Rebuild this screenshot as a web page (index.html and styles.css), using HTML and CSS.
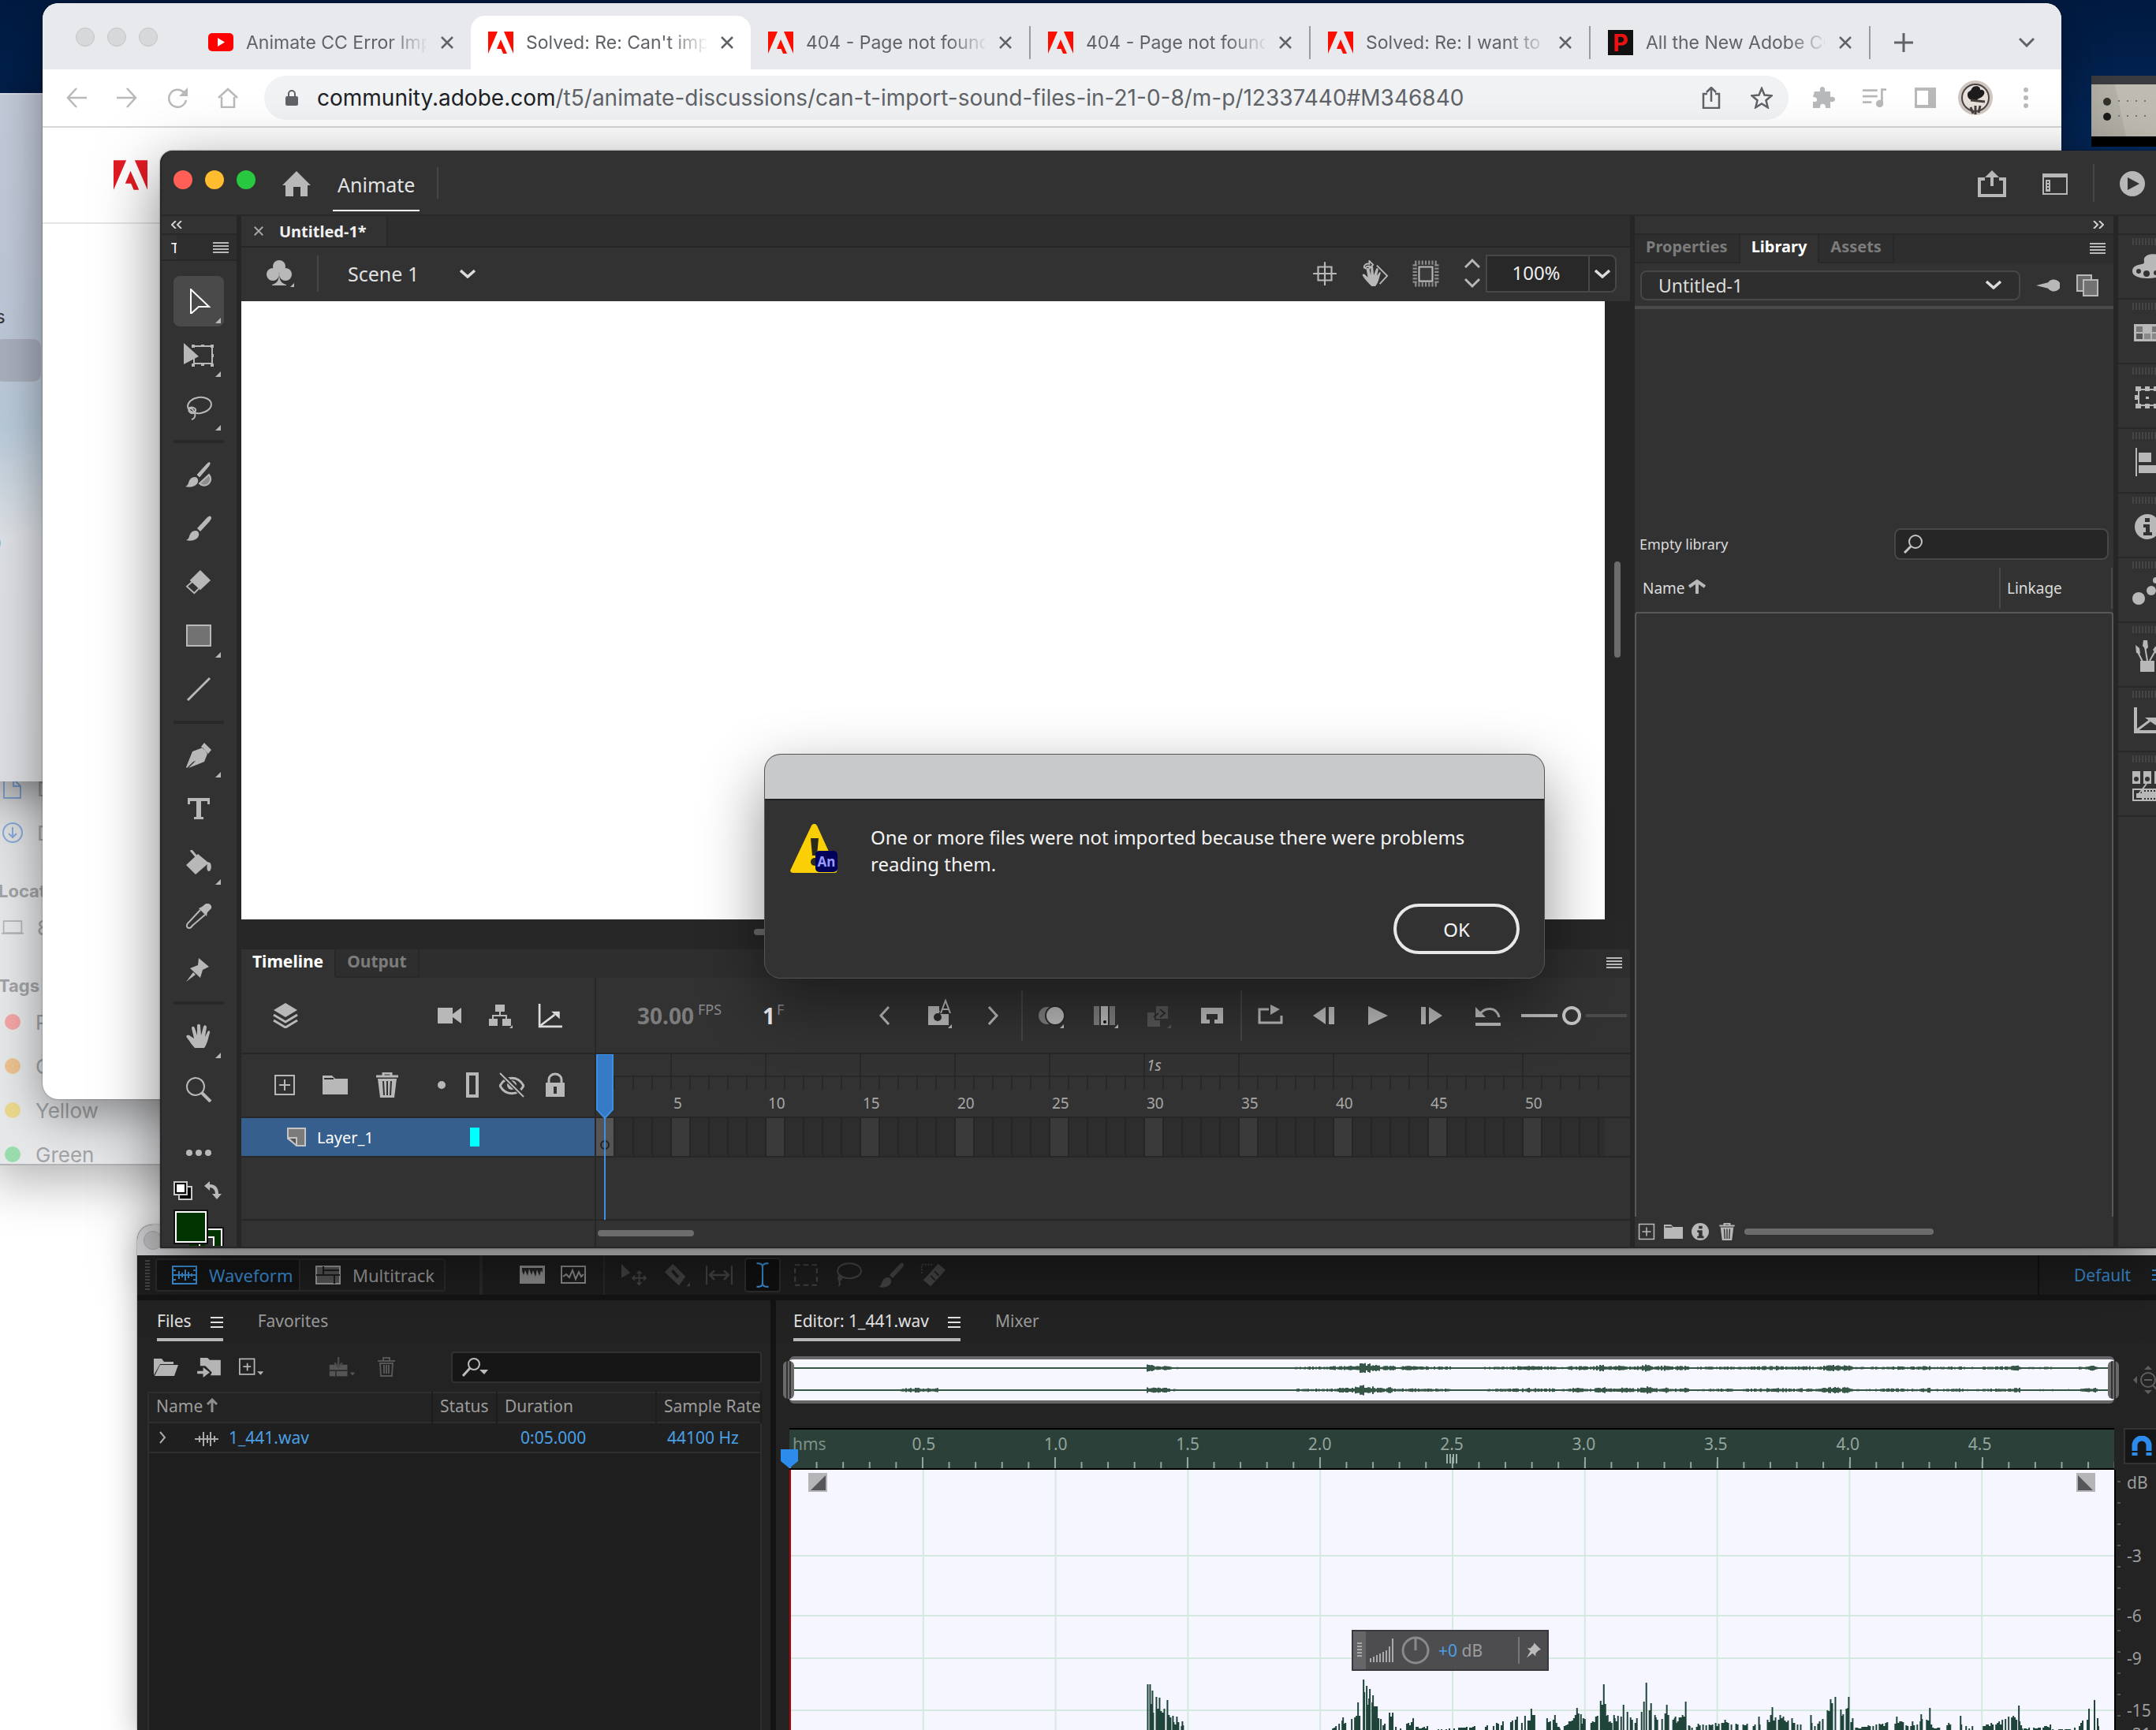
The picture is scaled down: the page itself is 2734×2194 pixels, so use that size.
FILE: index.html
```
<!DOCTYPE html>
<html lang="en">
<head>
    <meta charset="UTF-8">
    <title>Desktop</title>
    <link rel="stylesheet" href="styles.css">
</head>
<body>
<!-- shared icons -->
<svg class="sprite" aria-hidden="true">
    <symbol id="adobe" viewBox="0 0 32 28"><path d="M0 0h12L0 28zM20 0h12v28zM16 10l8 18h-5l-2.500-6H11z" fill="currentColor"/></symbol>
    <symbol id="close" viewBox="0 0 16 16"><path d="M1 1l14 14M15 1L1 15" stroke="currentColor" stroke-width="2.500" fill="none"/></symbol>
    <symbol id="menu" viewBox="0 0 20 14"><path d="M0 1h20M0 5h20M0 9h20M0 13h20" stroke="currentColor" stroke-width="2"/></symbol>
    <symbol id="menu3" viewBox="0 0 16 16"><path d="M0 2h16M0 8h16M0 14h16" stroke="currentColor" stroke-width="2"/></symbol>
    <symbol id="down" viewBox="0 0 20 12"><path d="M1 2l9 8 9-8" stroke="currentColor" stroke-width="3.500" fill="none"/></symbol>
    <symbol id="corner" viewBox="0 0 8 8"><path d="M8 0v8H0z" fill="currentColor"/></symbol>
    <symbol id="plusbox" viewBox="0 0 28 28"><path d="M2 2h24v24H2zM14 7v14M7 14h14" stroke="currentColor" stroke-width="2" fill="none"/></symbol>
    <symbol id="folder" viewBox="0 0 32 28"><path d="M0 2h12l4 4h16v20H0z" fill="currentColor"/><path d="M2 6h12" stroke="#323232" stroke-width="2"/></symbol>
    <symbol id="trash" viewBox="0 0 30 32"><path d="M10 4V1h10v3M1 5h28" stroke="currentColor" stroke-width="3" fill="none"/><path d="M3 8h24l-3 24H6z" fill="currentColor"/><path d="M10 11l1 18M15 11v18M20 11l-1 18" stroke="#323232" stroke-width="2"/></symbol>
    <symbol id="graph" viewBox="0 0 30 30"><path d="M2 1v27h27" stroke="currentColor" stroke-width="2.500" fill="none"/><path d="M3 27L20 14" stroke="currentColor" stroke-width="2.500"/><path d="M16 10h10v9z" fill="currentColor"/></symbol>
    <symbol id="brush" viewBox="0 0 32 32"><path d="M31 1c2 1 1 3-1 6L18 20l-4-4L26 3c2-2 4-3 5-2z" fill="currentColor"/><path d="M12 19c3 0 5 3 4 6-1 5-8 8-16 6 5-2 3-5 6-9 1-2 4-3 6-3z" fill="currentColor"/></symbol>
    <symbol id="palmhand" viewBox="0 0 32 32"><path d="M11 31c-4-4-6-8-10-13-2-3 1-4 3-3l6 4L7 6c0-3 3-3 4 0l3 9V3c0-3 4-3 4 0l1 12 3-11c1-3 4-2 4 1l-2 12 3-6c1-3 4-2 3 1-2 6-3 14-7 19z" fill="currentColor"/></symbol>
</svg>

<div class="desktop">

    <!-- picture-in-picture thumb -->
    <svg class="thumb" viewBox="0 0 82 90"><path d="M0 0h82v11H0z" fill="#3a3b3f"/><path d="M0 11h82v66H0z" fill="#b2afa6"/><path d="M30 11h52v66H44z" fill="#bebbb2"/><path d="M0 77h82v13H0z" fill="#000"/><circle cx="20" cy="33" r="5" fill="#33322f"/><circle cx="20" cy="52" r="5" fill="#1c1b1a"/><path d="M34 32h42M34 51h44" stroke="#77746d" stroke-width="2" stroke-dasharray="2 9"/></svg>

    <!-- finder windows, mostly covered -->
    <section class="window finder-back">
        <ul>
            <li><svg viewBox="0 0 26 28"><path d="M2 2h12l9 9v15H2zM14 2v9h9" fill="none" stroke="#86a9d8" stroke-width="2"/></svg>Documents</li>
            <li><svg viewBox="0 0 26 28"><circle cx="13" cy="14" r="12" fill="none" stroke="#86a9d8" stroke-width="2"/><path d="M13 7v13M8 15l5 5 5-5" fill="none" stroke="#86a9d8" stroke-width="2"/></svg>Downloads</li>
            <li class="finder-head">Locations</li>
            <li><svg viewBox="0 0 32 28"><path d="M3 5h26v17H3zM0 23h32" fill="none" stroke="#b2b3b6" stroke-width="2"/></svg>8GB</li>
            <li class="finder-head">Tags</li>
            <li><i class="tag red"></i>Red</li>
            <li><i class="tag orange"></i>Orange</li>
            <li><i class="tag yellow"></i>Yellow</li>
            <li><i class="tag green"></i>Green</li>
        </ul>
    </section>
    <section class="window finder-front">
        <div class="finder-item">s</div>
        <div class="finder-selected"></div>
        <div class="finder-item">)</div>
    </section>

    <!-- browser -->
    <section class="window chrome">
        <div class="tabstrip">
            <div class="lights inactive"><i></i><i></i><i></i></div>
            <div class="tab"><svg class="fav" viewBox="0 0 32 24"><rect width="32" height="23" rx="5" fill="#f00"/><path d="M12 6l9 5.500-9 5.500z" fill="#fff"/></svg><span>Animate CC Error Import</span><button aria-label="Close"><svg><use href="#close"/></svg></button></div>
            <div class="tab active"><svg class="fav"><use href="#adobe"/></svg><span>Solved: Re: Can't import</span><button aria-label="Close"><svg><use href="#close"/></svg></button></div>
            <div class="tab sep"><svg class="fav"><use href="#adobe"/></svg><span>404 - Page not found</span><button aria-label="Close"><svg><use href="#close"/></svg></button></div>
            <div class="tab sep"><svg class="fav"><use href="#adobe"/></svg><span>404 - Page not found</span><button aria-label="Close"><svg><use href="#close"/></svg></button></div>
            <div class="tab sep"><svg class="fav"><use href="#adobe"/></svg><span>Solved: Re: I want to</span><button aria-label="Close"><svg><use href="#close"/></svg></button></div>
            <div class="tab sep"><b class="fav favp">P</b><span>All the New Adobe CC</span><button aria-label="Close"><svg><use href="#close"/></svg></button></div>
            <button class="newtab" aria-label="New tab"><svg viewBox="0 0 24 24"><path d="M12 0v24M0 12h24" stroke="currentColor" stroke-width="3"/></svg></button>
            <button class="tabsearch" aria-label="Search tabs"><svg viewBox="0 0 20 12"><path d="M1 1l9 9 9-9" stroke="currentColor" stroke-width="3" fill="none"/></svg></button>
        </div>
        <div class="navbar">
            <div class="nav-buttons">
                <button aria-label="Back"><svg viewBox="0 0 26 26"><path d="M26 13H2M13 1L2 13l11 12" stroke="currentColor" stroke-width="2.500" fill="none"/></svg></button>
                <button aria-label="Forward"><svg viewBox="0 0 26 26"><path d="M0 13h24M13 1l11 12-11 12" stroke="currentColor" stroke-width="2.500" fill="none"/></svg></button>
                <button aria-label="Reload"><svg viewBox="0 0 26 26"><path d="M24 16a11 11 0 1 1-3-10" stroke="currentColor" stroke-width="2.500" fill="none"/><path d="M26 0v11H15z" fill="currentColor"/></svg></button>
                <button aria-label="Home"><svg viewBox="0 0 26 26"><path d="M5 12v13h16V12M1 13L13 2l12 11" stroke="currentColor" stroke-width="2.500" fill="none"/></svg></button>
            </div>
            <div class="omnibox">
                <svg class="lock" viewBox="0 0 16 20"><rect y="8" width="16" height="12" rx="2" fill="#5f6368"/><path d="M4 9V5a4 4 0 0 1 8 0v4" stroke="#5f6368" stroke-width="2" fill="none"/></svg>
                <a href="#"><b>community.adobe.com</b>/t5/animate-discussions/can-t-import-sound-files-in-21-0-8/m-p/12337440#M346840</a>
                <button aria-label="Share"><svg viewBox="0 0 28 28"><path d="M9 9H4v18h20V9h-5M14 19V2M8 7l6-6 6 6" stroke="currentColor" stroke-width="2.500" fill="none"/></svg></button>
                <button aria-label="Bookmark"><svg viewBox="0 0 28 28"><path d="M14 2l3.500 8.500 9 .8-7 6 2.200 9L14 21.500 6.300 26.300l2.200-9-7-6 9-.8z" stroke="currentColor" stroke-width="2.500" fill="none"/></svg></button>
            </div>
            <div class="extensions">
                <svg viewBox="0 0 28 28"><path d="M2 6h7c-2-8 8-8 6 0h7v7c8-2 8 8 0 6v8h-6c1-7-8-7-7 0H0v-8c7 1 7-6 0-6z" fill="#b7b9bb"/></svg>
                <svg viewBox="0 0 32 28"><path d="M0 4h20M0 12h20M0 20h12" stroke="#b7b9bb" stroke-width="3"/><path d="M32 3h-6v18" stroke="#b7b9bb" stroke-width="3" fill="none"/><circle cx="23" cy="22" r="5" fill="#b7b9bb"/></svg>
                <svg viewBox="0 0 28 28"><path d="M1 1h27v26H1z" fill="#b7b9bb"/><path d="M4 5h14v18H4z" fill="#fff"/></svg>
                <svg class="avatar" viewBox="0 0 44 44"><circle cx="22" cy="22" r="22" fill="#cfc6bf"/><circle cx="22" cy="22" r="17" fill="#e6dfda" stroke="#4a4443" stroke-width="2"/><path d="M12 17c1-4 4-3 5-6 3-6 12-4 11 1 5-1 7 4 4 7-3 4-6 3-8 6-5 2-13-1-12-8z" fill="#1d1b1c"/><path d="M16 25l18 2M16 34l3 8M22 32v11M28 32l-2 9" stroke="#443e3d" stroke-width="3"/></svg>
                <svg viewBox="0 0 28 28"><circle cx="14" cy="4" r="3" fill="#b7b9bb"/><circle cx="14" cy="14" r="3" fill="#b7b9bb"/><circle cx="14" cy="24" r="3" fill="#b7b9bb"/></svg>
            </div>
        </div>
        <div class="page-header"><svg class="page-logo"><use href="#adobe"/></svg></div>
    </section>

    <!-- audition -->
    <section class="window audition">
        <div class="au-title"><i></i></div>
        <div class="au-body">
            <div class="au-toolbar">
                <i class="grip"></i>
                <div class="au-modes">
                    <button class="on"><svg viewBox="0 0 32 24"><path d="M1 1h30v22H1zM1 12h30M1 6h4M1 18h4M27 6h4M27 18h4" stroke="currentColor" stroke-width="2" fill="none"/><path d="M9 7v10M13 9v6M17 5v14M21 8v8M25 10v4" stroke="currentColor" stroke-width="2"/></svg>Waveform</button>
                    <button><svg viewBox="0 0 32 24"><path d="M1 1h30v22H1z" stroke="currentColor" stroke-width="2" fill="#555"/><path d="M10 1v11M1 12h30M24 12v11M10 6h20" stroke="#1e1e1e" stroke-width="2"/></svg>Multitrack</button>
                </div>
                <i class="au-sep"></i>
                <div class="au-views">
                    <svg viewBox="0 0 32 24"><path d="M0 0h32v23H0z" fill="#8e8e8e"/><path d="M3 3h26v6l-2-3-2 7-3-8-2 9-3-8-2 6-3-8-2 9-3-7-2 6-2-5z" fill="#222"/></svg>
                    <svg viewBox="0 0 32 24"><path d="M1 1h30v21H1z" stroke="#8e8e8e" stroke-width="2" fill="none"/><path d="M3 14l4-3 4 4 4-9 4 11 4-9 3 6 3-3" stroke="#8e8e8e" stroke-width="2" fill="none"/></svg>
                </div>
                <i class="au-sep thin"></i>
                <div class="au-tools">
                    <svg viewBox="0 0 36 30"><path d="M1 0v19l12-7z" fill="currentColor"/><path d="M25 10v18M16 19h18M22 13l3-3 3 3M22 25l3 3 3-3M19 16l-3 3 3 3M31 16l3 3-3 3" stroke="currentColor" stroke-width="2" fill="none"/></svg>
                    <svg viewBox="0 0 36 30"><path d="M2 11L13 0l17 17-9 12z" fill="currentColor"/><path d="M12 9l8 9" stroke="#1e1e1e" stroke-width="4"/><path d="M36 25v5h-5z" fill="currentColor"/></svg>
                    <svg viewBox="0 0 40 30"><path d="M1 1v28M39 1v28M6 15h28M13 8l-7 7 7 7M27 8l7 7-7 7" stroke="currentColor" stroke-width="3" fill="none"/></svg>
                    <button aria-label="Time selection"><svg viewBox="0 0 16 30"><path d="M1 1c4 0 7 1 7 4v20c0 3-3 4-7 4M15 1c-4 0-7 1-7 4M15 29c-4 0-7-1-7-4" stroke="#3b8fd6" stroke-width="2" fill="none"/></svg></button>
                    <svg viewBox="0 0 30 30"><path d="M2 3h26v24H2z" stroke="currentColor" stroke-width="2" fill="none" stroke-dasharray="6 4"/></svg>
                    <svg viewBox="0 0 32 30"><ellipse cx="17" cy="10" rx="14" ry="9" stroke="currentColor" stroke-width="2" fill="none"/><path d="M7 15c-5 3-3 7 0 5s-2-6-2 0 2 6-1 8" stroke="currentColor" stroke-width="2" fill="none"/></svg>
                    <svg><use href="#brush"/></svg>
                    <svg viewBox="0 0 36 32"><path d="M24 1l10 8-20 22-10-8z" fill="currentColor"/><path d="M19 11l6 6M14 17l6 6" stroke="#1e1e1e" stroke-width="2"/><path d="M2 14V2h14" stroke="currentColor" stroke-width="2" fill="none" stroke-dasharray="2 2"/></svg>
                </div>
                <div class="au-workspace"><a href="#">Default</a><svg><use href="#menu3"/></svg></div>
            </div>
            <div class="au-panels">
                <div class="au-files">
                    <div class="au-tabs">
                        <a class="on" href="#">Files<svg><use href="#menu3"/></svg></a>
                        <a href="#">Favorites</a>
                    </div>
                    <div class="au-filebar">
                        <svg viewBox="0 0 32 24"><path d="M0 22V1h10l3 4h12v3H8z" fill="#b4b4b4"/><path d="M8 9h23l-5 14H1z" fill="#b4b4b4"/></svg>
                        <svg viewBox="0 0 32 28"><path d="M4 1h10l3 3h15v21H18l2-4-9-9H4z" fill="#b4b4b4"/><path d="M0 19h8v-5l9 7-9 7v-5H0z" fill="#b4b4b4"/></svg>
                        <svg viewBox="0 0 36 26"><path d="M1 1h21v22H1zM12 7v11M6 12h11" stroke="#b4b4b4" stroke-width="2" fill="none"/><path d="M26 19h9l-4 5z" fill="#b4b4b4"/></svg>
                        <i class="au-gap"></i>
                        <svg class="dim" viewBox="0 0 40 32"><path d="M0 12h28v18H0z" fill="#555"/><path d="M0 21h28M10 21v9" stroke="#2a2a2a" stroke-width="2"/><path d="M14 0v14M8 9l6 7 6-7" stroke="#4a4a4a" stroke-width="3" fill="none"/><path d="M32 24h8l-4 5z" fill="#555"/></svg>
                        <svg class="dim" viewBox="0 0 24 26"><path d="M8 4V1h8v3M1 5h22M4 8h16l-1 16H5zM9 10v11M12 10v11M15 10v11" stroke="#555" stroke-width="2" fill="none"/></svg>
                        <label class="au-search"><svg viewBox="0 0 34 24"><circle cx="15" cy="8" r="7" stroke="#bbb" stroke-width="2" fill="none"/><path d="M10 13L1 23" stroke="#bbb" stroke-width="3"/><path d="M22 15h11l-5 6z" fill="#bbb"/></svg><input type="text" aria-label="Search files"></label>
                    </div>
                    <table class="au-table">
                        <thead>
                            <tr><th>Name<svg viewBox="0 0 16 18"><path d="M8 18V3M2 8l6-6 6 6" stroke="#8e8e8e" stroke-width="3" fill="none"/></svg></th><th>Status</th><th>Duration</th><th>Sample Rate</th></tr>
                        </thead>
                        <tbody>
                            <tr>
                                <td><svg class="twist" viewBox="0 0 10 16"><path d="M1 1l6 7-6 7" stroke="#aaa" stroke-width="2" fill="none"/></svg><svg class="wavicon" viewBox="0 0 30 22"><path d="M0 11h30M6 7v8M11 2v18M16 6v10M20 2v18M25 7v8" stroke="#aaa" stroke-width="2"/></svg>1_441.wav</td>
                                <td></td><td>0:05.000</td><td>44100 Hz</td>
                            </tr>
                        </tbody>
                    </table>
                    <div class="au-list"></div>
                </div>
                <div class="au-editor">
                    <div class="au-tabs">
                        <a class="on" href="#">Editor: 1_441.wav<svg><use href="#menu3"/></svg></a>
                        <a href="#">Mixer</a>
                    </div>
                    <div class="au-overview-row">
                        <div class="au-overview"><svg id="overview" viewBox="0 0 1680 52" preserveAspectRatio="none"></svg></div>
                        <svg class="au-zoom" viewBox="0 0 40 36"><circle cx="19" cy="18" r="9" stroke="#5d5d5d" stroke-width="2" fill="none"/><path d="M14 18h10M25 25l9 9" stroke="#5d5d5d" stroke-width="2"/><path d="M19 0l5 5H14zM19 36l5-5H14zM0 18l5-5v10z" fill="#5d5d5d"/></svg>
                    </div>
                    <div class="au-ruler-row">
                        <div class="au-ruler">
                            <em>hms</em>
                            <span>0.5</span><span>1.0</span><span>1.5</span><span>2.0</span><span>2.5</span><span>3.0</span><span>3.5</span><span>4.0</span><span>4.5</span>
                            <svg class="au-mid" viewBox="0 0 14 12"><path d="M1 0v12M5 0v12M9 0v12M13 0v12" stroke="#9fb0a9" stroke-width="2"/></svg>
                            <svg class="au-head" viewBox="0 0 22 24"><path d="M0 0h22v15L11 24 0 15z" fill="#2d8ceb"/></svg>
                        </div>
                        <button class="au-snap" aria-label="Snap"><svg viewBox="0 0 26 26"><path d="M4 25V12a9 9 0 0 1 18 0v13" stroke="#2d8ceb" stroke-width="7" fill="none"/><path d="M0 20h8M18 20h8" stroke="#161616" stroke-width="2"/></svg></button>
                    </div>
                    <div class="au-wave-row">
                        <div class="au-wave">
                            <svg id="wave" viewBox="0 0 1680 330" preserveAspectRatio="none"></svg>
                            <svg class="fade in" viewBox="0 0 24 24"><path d="M0 0h24v24H0z" fill="#b5b5b8"/><path d="M22 3v19H3z" fill="#55555a"/></svg>
                            <svg class="fade out" viewBox="0 0 24 24"><path d="M0 0h24v24H0z" fill="#b5b5b8"/><path d="M2 3v19h19z" fill="#55555a"/></svg>
                            <div class="hud">
                                <i class="hud-grip"></i>
                                <svg viewBox="0 0 32 30"><path d="M2 30v-5M6 30v-7M10 30v-9M14 30V19M18 30V17M22 30V15M26 30V10M30 30V0" stroke="#aaa" stroke-width="2"/></svg>
                                <svg class="knob" viewBox="0 0 36 36"><circle cx="18" cy="18" r="16" stroke="#8a8a8c" stroke-width="3" fill="none"/><path d="M18 2v16" stroke="#8a8a8c" stroke-width="3"/></svg>
                                <span><b>+0</b> dB</span>
                                <svg class="hud-pin" viewBox="0 0 20 20"><path d="M11 0l9 9-3 1-4 4 0 4-4-4-8 6 5-9-4-4 4 0 4-4z" fill="#bbb"/></svg>
                            </div>
                        </div>
                        <div class="au-scale"><span>dB</span><span>-3</span><span>-6</span><span>-9</span><span>-15</span><span>-21</span></div>
                    </div>
                </div>
            </div>
        </div>
    </section>

    <!-- animate -->
    <section class="window animate">
        <header class="an-title">
            <div class="lights"><i class="red"></i><i class="amber"></i><i class="lime"></i></div>
            <svg class="an-home" viewBox="0 0 36 32"><path d="M18 0l18 18h-4v14h-9V20h-9v12H4V18H0z" fill="#b8b8b8"/></svg>
            <a class="an-name" href="#">Animate</a>
            <i class="an-vline"></i>
            <div class="an-right">
                <svg viewBox="0 0 36 34"><path d="M9 11H2v21h32V11h-7" stroke="#b8b8b8" stroke-width="4" fill="none"/><path d="M18 20V6" stroke="#b8b8b8" stroke-width="4"/><path d="M9 9l9-9 9 9z" fill="#b8b8b8"/></svg>
                <svg viewBox="0 0 36 34"><path d="M3 6h30v24H3z" stroke="#b8b8b8" stroke-width="2" fill="none"/><path d="M2 4h32v5H2zM6 12h6v15H6z" fill="#b8b8b8"/><path d="M8 14h2v2H8zM8 18h2v2H8zM8 22h2v2H8z" fill="#323232"/></svg>
                <i class="an-vline tall"></i>
                <svg viewBox="0 0 36 34"><circle cx="18" cy="17" r="16" fill="#b8b8b8"/><path d="M12 9l15 8-15 8z" fill="#323232"/></svg>
            </div>
        </header>
        <div class="an-main">

            <aside class="tools">
                <div class="tools-collapse"><svg viewBox="0 0 14 10"><path d="M6 0L1 5l5 5M13 0L8 5l5 5" stroke="#d0d0d0" stroke-width="2" fill="none"/></svg></div>
                <div class="tools-tab"><span>T</span><svg><use href="#menu"/></svg></div>
                <div class="toolset">
                    <button class="on" aria-label="Selection"><svg viewBox="0 0 32 32"><path d="M6 1v31l10-9h13z" stroke="#fff" stroke-width="2" fill="none"/></svg><svg class="more"><use href="#corner"/></svg></button>
                    <button aria-label="Free transform"><svg class="big" viewBox="0 0 38 32"><path d="M0 1v27l19-10z" fill="currentColor"/><path d="M14 5h22v22H13v-6" stroke="currentColor" stroke-width="2" fill="none"/><path d="M10 3h4v4h-4zM22 3h4v3h-4zM34 3h4v4h-4zM35 15h3v4h-3zM34 27h4v4h-4zM22 27h4v3h-4zM10 27h4v4h-4z" fill="currentColor"/></svg><svg class="more"><use href="#corner"/></svg></button>
                    <button aria-label="Lasso"><svg viewBox="0 0 32 32"><ellipse cx="17" cy="12" rx="15" ry="10" stroke="currentColor" stroke-width="2" fill="none" transform="rotate(-8 17 12)"/><path d="M3 16c3-3 10-1 9 3s-6 4-8 1 2-6 5-2 4 10-2 12" stroke="currentColor" stroke-width="2" fill="none"/></svg><svg class="more"><use href="#corner"/></svg></button>
                    <hr>
                    <button aria-label="Fluid brush"><svg viewBox="0 0 34 32"><path d="M30 16a8 8 0 1 1-12 11z" fill="#8c8c8c" stroke="currentColor" stroke-width="2"/><path d="M31 0c2 1 1 3-1 6L18 20l-4-4L26 3c2-2 4-4 5-3z" fill="currentColor" stroke="#323232" stroke-width="1"/><path d="M12 19c3 0 5 3 4 6-1 5-8 8-16 6 5-2 3-5 6-9 1-2 4-3 6-3z" fill="currentColor"/></svg></button>
                    <button aria-label="Brush"><svg><use href="#brush"/></svg></button>
                    <button aria-label="Eraser"><svg viewBox="0 0 34 34"><path d="M19 1l14 14-14 13L5 15z" fill="currentColor"/><path d="M8 17l-7 6 10 9 6-6" stroke="currentColor" stroke-width="2" fill="none"/></svg></button>
                    <button aria-label="Rectangle"><svg viewBox="0 0 32 32"><path d="M1 3h30v26H1z" stroke="currentColor" stroke-width="2" fill="#727272"/></svg><svg class="more"><use href="#corner"/></svg></button>
                    <button aria-label="Line"><svg viewBox="0 0 32 32"><path d="M2 30L30 2" stroke="currentColor" stroke-width="3"/></svg></button>
                    <hr>
                    <button aria-label="Pen"><svg viewBox="0 0 32 32"><path d="M21 6L8 11 0 31l1 1 8-8 3-1-9 9 20-8 4-10zM23 0l9 9-4 5-9-9z" fill="currentColor"/></svg><svg class="more"><use href="#corner"/></svg></button>
                    <button aria-label="Text"><svg viewBox="0 0 32 32"><path d="M2 2h28v8h-3V6h-8v20h3v3H10v-3h3V6H5v4H2z" fill="currentColor"/></svg></button>
                    <button aria-label="Paint bucket"><svg viewBox="0 0 32 32"><path d="M0 19L15 5l12 10 3 1c3 2 2 11-1 11s-3-6-2-9l-15 13z" fill="currentColor"/><path d="M6 0l10 12" stroke="currentColor" stroke-width="3"/></svg><svg class="more"><use href="#corner"/></svg></button>
                    <button aria-label="Eyedropper"><svg viewBox="0 0 32 32"><path d="M18 8L2 25c-2 3-1 6 2 6s3-3 5-4L24 14" stroke="currentColor" stroke-width="2" fill="none"/><path d="M16 6l4-2 5-4c5-1 8 2 7 6l-5 5-1 5z" fill="currentColor"/></svg></button>
                    <button aria-label="Asset warp"><svg viewBox="0 0 32 32"><path d="M16 1l13 11-8 4-3 10L5 14l10-4zM9 19l3 3L0 31z" fill="currentColor"/></svg></button>
                    <hr>
                    <button aria-label="Hand"><svg><use href="#palmhand"/></svg><svg class="more"><use href="#corner"/></svg></button>
                    <button aria-label="Zoom"><svg viewBox="0 0 32 32"><circle cx="12" cy="12" r="11" stroke="currentColor" stroke-width="2" fill="none"/><path d="M20 20l11 11" stroke="currentColor" stroke-width="4"/></svg></button>
                </div>
                <div class="swatches">
                    <svg class="dots" viewBox="0 0 32 8"><circle cx="4" cy="4" r="4" fill="#b8b8b8"/><circle cx="16" cy="4" r="4" fill="#b8b8b8"/><circle cx="28" cy="4" r="4" fill="#b8b8b8"/></svg>
                    <div class="swatch-tools">
                        <svg viewBox="0 0 24 24"><path d="M7 7h16v16H7z" fill="#000" stroke="#c8c8c8" stroke-width="2"/><path d="M1 1h16v16H1z" fill="#fff" stroke="#c8c8c8" stroke-width="2"/><path d="M3 3h12v12H3z" stroke="#000" stroke-width="2" fill="none"/></svg>
                        <svg viewBox="0 0 22 24"><path d="M0 6l7-6v4c7 0 11 4 11 12h4l-6 7-6-7h4c0-5-3-8-7-8v4z" fill="#b8b8b8"/></svg>
                    </div>
                    <svg class="swatch" viewBox="0 0 64 46"><path d="M20 36h20v10H20z" fill="#030"/><path d="M30 22h34v24H30z" fill="#111"/><path d="M32 24h30v22H32z" fill="#fff"/><path d="M34 26h26v20H34z" fill="#030"/><path d="M40 34h12v12H40z" fill="#fff"/><path d="M40 36h10v10H40z" fill="#323232"/><path d="M0 0h44v44H0z" fill="#111"/><path d="M2 2h40v40H2z" fill="#fff"/><path d="M4 4h36v36H4z" fill="#030"/></svg>
                </div>
            </aside>

            <main class="doc">
                <div class="doc-tabs"><div><svg><use href="#close"/></svg>Untitled-1*</div></div>
                <div class="editbar">
                    <svg class="club" viewBox="0 0 36 36"><circle cx="16" cy="9" r="8" fill="#b8b8b8"/><circle cx="8" cy="19" r="8" fill="#b8b8b8"/><circle cx="24" cy="19" r="8" fill="#b8b8b8"/><path d="M16 16c0 10-2 14-9 16v1h18v-1c-7-2-9-6-9-16z" fill="#b8b8b8"/><path d="M35 30v5h-5z" fill="#b8b8b8"/></svg>
                    <i class="bar-sep"></i>
                    <button class="scene">Scene 1<svg><use href="#down"/></svg></button>
                    <div class="editbar-right">
                        <svg viewBox="0 0 32 32"><path d="M16 2v28M2 16h28M8 8h16v16H8z" stroke="#b8b8b8" stroke-width="2" fill="none"/></svg>
                        <svg viewBox="0 0 36 36"><path d="M13 35C9 31 5 27 1 21c-1-3 2-3 4-1l3 3L6 12c0-2 3-2 4 0l2 8V10c0-3 3-3 3 0l1 10 3-8c1-2 3-2 3 1l-2 8 3-4c1-2 3-1 2 1-2 6-3 13-7 17z" fill="#b8b8b8"/><path d="M3 10c0-4 3-6 7-5V1l5 5-5 5V8c-3 0-4 0-5 3zM20 7l14 14-10 11" stroke="#b8b8b8" stroke-width="2" fill="none"/></svg>
                        <svg viewBox="0 0 32 32"><path d="M3 3h26v26H3z" stroke="#8c8c8c" stroke-width="5" fill="none" stroke-dasharray="2 2"/><path d="M8 8h16v17H8z" stroke="#b8b8b8" stroke-width="2" fill="#3a3a3a"/></svg>
                        <svg class="stepper" viewBox="0 0 20 40"><path d="M1 12l9-9 9 9M1 27l9 9 9-9" stroke="#b8b8b8" stroke-width="3" fill="none"/></svg>
                        <div class="zoombox"><input type="text" value="100%" aria-label="Zoom"><button aria-label="Zoom levels"><svg><use href="#down"/></svg></button></div>
                    </div>
                </div>
                <div class="stage"><div class="canvas"></div><div class="vscroll"><i></i></div></div>
                <div class="hscroll"><i></i></div>

                <div class="tl-tabs"><b class="on">Timeline</b><b>Output</b><svg><use href="#menu"/></svg></div>
                <div class="timeline">
                    <div class="tl-left-top">
                        <svg viewBox="0 0 32 32"><path d="M16 0l15 9-15 9L1 9z" fill="#b8b8b8"/><path d="M1 15l15 9 15-9M1 22l15 9 15-9" stroke="#b8b8b8" stroke-width="3" fill="none"/></svg>
                        <div>
                            <svg viewBox="0 0 32 32"><path d="M1 6h19v8l11-8v20l-11-8v8H1z" fill="#b8b8b8"/></svg>
                            <svg viewBox="0 0 32 32"><path d="M10 2h12v9H10zM2 20h11v9H2zM19 20h11v9H19z" fill="#b8b8b8"/><path d="M16 11v5M7 20v-4h17v4" stroke="#b8b8b8" stroke-width="2" fill="none"/><path d="M32 28v4h-4z" fill="#b8b8b8"/></svg>
                            <svg><use href="#graph"/></svg>
                        </div>
                    </div>
                    <div class="tl-controls">
                        <div class="fps">30.00<sup>FPS</sup></div>
                        <div class="frame">1<sup>F</sup></div>
                        <div class="tl-group">
                            <svg viewBox="0 0 32 32"><path d="M20 5L10 16l10 11" stroke="#b8b8b8" stroke-width="3" fill="none"/></svg>
                            <svg viewBox="0 0 32 32"><path d="M2 4h14v6h12v18H2z" fill="#b8b8b8"/><circle cx="14" cy="18" r="5" fill="#2b2b2b"/><path d="M15 14h16v-2L24-3z" fill="#2b2b2b"/><path d="M18 13l6-16 6 16M20 8h8" stroke="#b8b8b8" stroke-width="2" fill="none"/><path d="M32 27v5h-5z" fill="#b8b8b8"/></svg>
                            <svg viewBox="0 0 32 32"><path d="M11 5l10 11-10 11" stroke="#b8b8b8" stroke-width="3" fill="none"/></svg>
                        </div>
                        <i class="tl-sep"></i>
                        <div class="tl-group">
                            <svg viewBox="0 0 32 32"><circle cx="11" cy="16" r="11" fill="#7d7d7d"/><circle cx="21" cy="16" r="12" fill="#b8b8b8" stroke="#2b2b2b" stroke-width="2"/><path d="M32 27v5h-5z" fill="#b8b8b8"/></svg>
                            <svg viewBox="0 0 32 32"><path d="M2 4h7v24H2zM22 4h7v24h-7z" fill="#7d7d7d"/><path d="M11 4h9v24h-9z" fill="#b8b8b8"/><circle cx="16" cy="24" r="2" fill="#111"/><path d="M33 27v5h-5z" fill="#b8b8b8"/></svg>
                            <svg viewBox="0 0 32 32"><path d="M2 12h9v10h7v8H2zM13 4h15v16H13z" fill="#555"/><path d="M10 18l6-5M18 8l6 5-6 5" stroke="#2b2b2b" stroke-width="2" fill="none"/><path d="M32 27v5h-5z" fill="#555"/></svg>
                            <svg viewBox="0 0 32 32"><path d="M2 6h28v20H19v-5h4v-7H9v7h4v5H2z" fill="#b8b8b8"/></svg>
                        </div>
                        <i class="tl-sep"></i>
                        <div class="tl-group">
                            <svg viewBox="0 0 32 32"><path d="M14 8H2v17h28v-9" stroke="#b8b8b8" stroke-width="3" fill="none"/><path d="M16 2l12 6-12 7z" fill="#b8b8b8"/></svg>
                            <svg viewBox="0 0 32 32"><path d="M18 5v22L2 16zM22 5h7v22h-7z" fill="#b8b8b8"/></svg>
                            <svg viewBox="0 0 32 32"><path d="M4 4l25 12L4 28z" fill="#b8b8b8"/></svg>
                            <svg viewBox="0 0 32 32"><path d="M3 5h6v22H3zM13 5l17 11-17 11z" fill="#b8b8b8"/></svg>
                            <svg viewBox="0 0 32 32"><path d="M9 15C16 4 31 5 34 18" stroke="#b8b8b8" stroke-width="3" fill="none"/><path d="M4 5v13h13zM4 25h32v4H4z" fill="#b8b8b8"/></svg>
                            <input type="range" min="0" max="100" value="47" aria-label="Frame view size">
                        </div>
                    </div>
                    <div class="tl-layer-tools">
                        <svg><use href="#plusbox"/></svg>
                        <svg class="wide"><use href="#folder"/></svg>
                        <svg class="wide"><use href="#trash"/></svg>
                        <div>
                            <svg viewBox="0 0 10 32"><circle cx="5" cy="16" r="5" fill="#b8b8b8"/></svg>
                            <svg viewBox="0 0 16 32"><path d="M2 2h12v28H2z" stroke="#b8b8b8" stroke-width="4" fill="none"/></svg>
                            <svg viewBox="0 0 32 32"><path d="M1 17C8 4 24 4 31 17 24 30 8 30 1 17z" stroke="#b8b8b8" stroke-width="3" fill="none"/><circle cx="16" cy="16" r="6" fill="#b8b8b8"/><path d="M2 1l29 29" stroke="#323232" stroke-width="6"/><path d="M1 1l30 30" stroke="#b8b8b8" stroke-width="2"/></svg>
                            <svg viewBox="0 0 26 32"><path d="M1 13h24v18H1z" fill="#b8b8b8"/><path d="M5 14V9a8 7 0 0 1 16 0v5" stroke="#b8b8b8" stroke-width="3" fill="none"/><path d="M11 18h4v9h-4z" fill="#323232"/></svg>
                        </div>
                    </div>
                    <div class="tl-ruler">
                        <div class="tl-seconds"><i>1s</i></div>
                        <div class="tl-ticks"></div>
                        <div class="tl-numbers"><span>5</span><span>10</span><span>15</span><span>20</span><span>25</span><span>30</span><span>35</span><span>40</span><span>45</span><span>50</span></div>
                        <svg class="playhead" viewBox="0 0 22 210"><path d="M1 0h20v70L11 81 1 70z" fill="#3679c4" stroke="#3e8fe6" stroke-width="2"/><path d="M11 80v130" stroke="#3e8fe6" stroke-width="2"/></svg>
                    </div>
                    <div class="tl-layer">
                        <svg viewBox="0 0 24 24"><path d="M1 1h22v22H13L1 14z" stroke="#c4c4c4" stroke-width="2" fill="#7b7b7b"/><path d="M1 13h11v10z" fill="#555" stroke="#c4c4c4" stroke-width="2"/></svg>
                        <span>Layer_1</span><i></i>
                    </div>
                    <div class="tl-frames"><svg viewBox="0 0 22 48"><path d="M0 0h22v48H0z" fill="#555"/><ellipse cx="11" cy="34" rx="5" ry="5" stroke="#222" stroke-width="2" fill="none"/></svg></div>
                    <div class="tl-empty"></div><div class="tl-empty"></div>
                    <div class="tl-foot"></div><div class="tl-foot"><i></i></div>
                </div>
            </main>

            <aside class="library">
                <div class="lib-collapse"><svg viewBox="0 0 14 10"><path d="M1 0l5 5-5 5M8 0l5 5-5 5" stroke="#d0d0d0" stroke-width="2" fill="none"/></svg></div>
                <div class="lib-tabs"><b>Properties</b><b class="on">Library</b><b>Assets</b><svg><use href="#menu"/></svg></div>
                <div class="lib-pick">
                    <div class="lib-select"><select aria-label="Document"><option>Untitled-1</option></select><svg><use href="#down"/></svg></div>
                    <svg viewBox="0 0 32 20"><path d="M0 10l16-4a9 8 0 1 1 0 8z" fill="#b8b8b8"/></svg>
                    <svg viewBox="0 0 28 28"><path d="M1 1h18v20H1z" stroke="#b8b8b8" stroke-width="2" fill="#6a6a6a"/><path d="M9 7h18v20H9z" stroke="#b8b8b8" stroke-width="2" fill="#727272"/></svg>
                </div>
                <div class="lib-preview"></div>
                <div class="lib-find"><span>Empty library</span><label><svg viewBox="0 0 24 24"><circle cx="15" cy="9" r="8" stroke="#c4c4c4" stroke-width="2" fill="none"/><path d="M9 15l-8 8" stroke="#c4c4c4" stroke-width="3"/></svg><input type="text" aria-label="Search library"></label></div>
                <table class="lib-table"><tr><th>Name<svg viewBox="0 0 22 18"><path d="M11 18V3M1 9l10-7 10 7" stroke="#b8b8b8" stroke-width="4" fill="none"/></svg></th><th>Linkage</th></tr></table>
                <div class="lib-list"></div>
                <div class="lib-foot">
                    <svg><use href="#plusbox"/></svg><svg><use href="#folder"/></svg>
                    <svg viewBox="0 0 24 24"><circle cx="12" cy="12" r="12" fill="#b8b8b8"/><path d="M10 4h5v4h-5zM8 10h7v8h2v3H8v-3h2v-5H8z" fill="#323232"/></svg>
                    <svg><use href="#trash"/></svg><i></i>
                </div>
            </aside>

            <nav class="dock">
                <button aria-label="Color"><svg viewBox="0 0 40 36"><path d="M1 22c0-6 5-8 12-9 5-1 2-4 3-7 2-7 16-7 24-3v25c-16 5-39 4-39-6z" fill="currentColor"/><circle cx="9" cy="22" r="3" fill="#323232"/><circle cx="19" cy="25" r="4" fill="#323232"/><circle cx="31" cy="24" r="3" fill="#323232"/></svg></button>
                <button aria-label="Swatches"><svg viewBox="0 0 40 36"><path d="M3 7h37v22H3z" fill="currentColor"/><path d="M6 10h8v7H6zM26 10h14v7H26z" fill="#777"/><path d="M6 19h8v7H6z" fill="#555"/><path d="M16 19h8v7h-8zM26 19h14v7H26z" fill="#888"/></svg></button>
                <button aria-label="Transform"><svg viewBox="0 0 40 36"><path d="M9 8h31M9 28h31M9 8v20" stroke="currentColor" stroke-width="2"/><path d="M5 4h7v6H5zM5 26h7v6H5zM4 15h5v6H4zM17 4h6v6h-6zM17 26h6v6h-6zM28 4h7v6h-7zM28 26h7v6h-7zM18 17h4v3h-4z" fill="currentColor"/></svg></button>
                <button aria-label="Align"><svg viewBox="0 0 40 36"><path d="M5 0h2v36H5zM9 6h16v12H9zM9 22h31v10H9z" fill="currentColor"/></svg></button>
                <button aria-label="Info"><svg viewBox="0 0 40 36"><circle cx="20" cy="18" r="16" fill="currentColor"/><path d="M17 7h6v5h-6zM15 15h8v10h3v4H15v-4h3v-6h-3z" fill="#323232"/></svg></button>
                <button aria-label="Motion"><svg viewBox="0 0 40 36"><circle cx="9" cy="27" r="8" fill="currentColor"/><circle cx="25" cy="17" r="6" fill="currentColor"/><circle cx="31" cy="4" r="4" fill="currentColor"/></svg></button>
                <button aria-label="Brushes"><svg viewBox="0 0 40 40"><path d="M11 26h18v14H11z" fill="currentColor"/><path d="M14 27L8 15M20 26L17 8M23 26l8-14" stroke="currentColor" stroke-width="2"/><path d="M5 6l5 4 1 7-5-1zM15 0h5l1 9-3 3-4-5zM27 12l3-4h6l-5 9z" fill="currentColor"/></svg></button>
                <button aria-label="Motion editor"><svg viewBox="0 0 40 36"><path d="M5 1v31h35" stroke="currentColor" stroke-width="4" fill="none"/><path d="M7 30l16-12" stroke="currentColor" stroke-width="3"/><path d="M17 14h18v12l-7-4z" fill="currentColor"/></svg></button>
                <button aria-label="Frame picker"><svg viewBox="0 0 40 40"><path d="M1 2h10v16H1zM15 2h10v16H15zM29 2h11v16H29zM1 24h39v16H1z" fill="currentColor"/><circle cx="6" cy="12" r="3" fill="#323232"/><circle cx="20" cy="12" r="3" fill="#323232"/><path d="M3 26h10v12H3z" fill="#323232"/><path d="M6 30h7v6H6z" fill="currentColor"/><path d="M16 27h24M16 37h24" stroke="#323232" stroke-width="2" stroke-dasharray="2 2"/><path d="M9 31l10-13" stroke="currentColor" stroke-width="2"/></svg></button>
            </nav>
        </div>
    </section>

    <!-- import error -->
    <section class="window dialog" role="alertdialog" aria-labelledby="message">
        <div class="dialog-title"></div>
        <div class="dialog-body">
            <svg viewBox="0 0 60 62"><path d="M27 2c2-3 5-3 7 0l25 55c1 3 0 5-3 5H4c-3 0-5-2-3-5z" fill="#fbcf06"/><path d="M26 18h10l-2 22h-6z" fill="#2b2a1c"/><circle cx="31" cy="48" r="5" fill="#2b2a1c"/><rect x="32" y="34" width="28" height="27" rx="5" fill="#00005b"/><text x="46" y="54" text-anchor="middle" font-family="Noto Sans, sans-serif" font-weight="bold" font-size="17" fill="#9999ff">An</text></svg>
            <p id="message">One or more files were not imported because there were problems reading them.</p>
            <button>OK</button>
        </div>
    </section>
</div>
<script src="wave.js"></script>
</body>
</html>
```

FILE: styles.css
```
* {
    box-sizing: border-box;
}
body {
    margin: 0;
    font-family: "Noto Sans", "Open Sans", sans-serif;
    color: #dcdcdc;
}
button, input, select {
    font: inherit;
    color: inherit;
    background: none;
    border: 0;
    padding: 0;
    margin: 0;
}
a {
    color: inherit;
    text-decoration: none;
}
svg, i {
    display: block;
    flex: none;
}
.sprite {
    position: absolute;
    width: 0;
    height: 0;
}
.desktop {
    position: relative;
    height: 100vh;
    overflow: hidden;
    background: linear-gradient(#001a40, #04285c 190px, #fff 1400px);
}
.desktop::before {
    content: "";
    position: absolute;
    left: 0;
    right: 0;
    top: 1000px;
    bottom: 0;
    background: #fff;
}
.window {
    position: absolute;
}
.thumb {
    position: absolute;
    right: 0;
    top: 96px;
    width: 82px;
}

/* finder */
.finder-back {
    left: -10px;
    top: 960px;
    width: 400px;
    bottom: 716px;
    background: linear-gradient(#d6d7d9, #e6e7e9 200px);
    border-bottom: 2px solid #b4b4b6;
    box-shadow: 0 20px 60px rgba(0, 0, 0, .3);
    font-family: Inter, sans-serif;
    font-size: 26px;
    color: #a2a3a6;
}
.finder-back ul {
    list-style: none;
    margin: 0;
    padding: 12px 0 0 12px;
}
.finder-back li {
    display: flex;
    align-items: center;
    gap: 17px;
    height: 56px;
}
.finder-back li svg {
    width: 28px;
    height: 28px;
}
.finder-back .finder-head {
    font-size: 22px;
    font-weight: bold;
    height: 64px;
    padding-top: 28px;
    margin-left: -4px;
}
.tag {
    width: 20px;
    height: 20px;
    border-radius: 50%;
    margin: 0 2px 0 4px;
}
.tag.red { background: #f3a5a6; }
.tag.orange { background: #eec290; }
.tag.yellow { background: #ead98c; }
.tag.green { background: #97dcaa; }
.finder-front {
    left: -10px;
    top: 118px;
    width: 100px;
    bottom: 1203px;
    background: linear-gradient(#c3cad8, #bcc6d6 300px, #b8c9d8 420px, #dcdfe3 560px, #dcdde0);
    border-top: 2px solid #d5dae3;
    box-shadow: 0 10px 60px rgba(0, 0, 0, .5);
    font-family: Inter, sans-serif;
    font-size: 24px;
    line-height: 32px;
    color: #333;
    padding: 266px 0 0 4px;
}
.finder-selected {
    height: 54px;
    width: 58px;
    margin: 12px 0 188px;
    border-radius: 10px;
    background: #a9aebc;
}

/* browser */
.chrome {
    left: 54px;
    right: 120px;
    top: 4px;
    bottom: 800px;
    background: #fff;
    border-radius: 20px;
    box-shadow: 0 0 2px rgba(0, 0, 0, .5), 0 20px 60px rgba(0, 0, 0, .4);
    font-family: Inter, Roboto, sans-serif;
    color: #5f6368;
}
.tabstrip {
    display: flex;
    align-items: center;
    height: 84px;
    padding: 16px 34px 0 42px;
    background: #e8e9ec;
    border-radius: 20px 20px 0 0;
}
.lights {
    display: flex;
    gap: 16px;
}
.lights i {
    width: 24px;
    height: 24px;
    border-radius: 50%;
}
.lights .red { background: #ff5f57; }
.lights .amber { background: #febc2e; }
.lights .lime { background: #28c840; }
.lights.inactive {
    width: 146px;
    padding-bottom: 14px;
}
.lights.inactive i {
    background: #d7d8da;
    border: 1px solid #c2c3c5;
}
.tab {
    display: flex;
    align-items: center;
    flex: 0 1 355px;
    min-width: 0;
    height: 68px;
    padding-left: 22px;
    font-size: 23px;
}
.tab .fav {
    width: 32px;
    height: 28px;
    margin-right: 16px;
    color: #fa0f00;
}
.tab span {
    flex: 1;
    overflow: hidden;
    white-space: nowrap;
    -webkit-mask-image: linear-gradient(90deg, #000 180px, transparent 232px);
    mask-image: linear-gradient(90deg, #000 180px, transparent 232px);
}
.tab button {
    width: 52px;
    margin-right: 4px;
}
.tab button svg {
    width: 16px;
    height: 16px;
    margin: 0 auto;
}
.tab.active {
    background: #fff;
    border-radius: 18px 18px 0 0;
}
.tab.sep {
    border: 0 solid transparent;
    border-image: linear-gradient(transparent 14px, #9a9b9e 14px, #9a9b9e 54px, transparent 54px) 1;
    border-width: 0 2px 0 0;
}
.tab .favp {
    height: 32px;
    background: #111;
    color: #e11;
    font-size: 30px;
    line-height: 32px;
    text-align: center;
}
.newtab svg {
    width: 24px;
    height: 24px;
    margin-left: 30px;
}
.tabsearch {
    margin-left: auto;
}
.tabsearch svg {
    width: 20px;
    height: 12px;
}
.navbar {
    display: flex;
    align-items: center;
    height: 74px;
    padding: 0 30px;
    border-bottom: 2px solid #d6d7d9;
}
.nav-buttons {
    display: flex;
    gap: 38px;
    width: 251px;
    color: #b7b9bb;
}
.nav-buttons svg {
    width: 26px;
    height: 26px;
}
.omnibox {
    display: flex;
    align-items: center;
    flex: 1;
    height: 56px;
    padding: 0 20px 0 27px;
    border-radius: 28px;
    background: #f1f2f4;
    font-size: 28px;
}
.omnibox .lock {
    width: 16px;
    height: 20px;
    margin-right: 24px;
}
.omnibox a {
    flex: 1;
    white-space: nowrap;
}
.omnibox b {
    font-weight: normal;
    color: #202124;
}
.omnibox button {
    margin-left: 36px;
}
.omnibox button svg {
    width: 28px;
    height: 28px;
}
.extensions {
    display: flex;
    align-items: center;
    gap: 34px;
    padding-left: 30px;
}
.extensions svg {
    width: 30px;
    height: 28px;
}
.extensions .avatar {
    width: 44px;
    height: 44px;
    margin: 0 -7px;
}
.page-header {
    height: 122px;
    padding: 41px 0 0 90px;
    border-bottom: 2px solid #e6e6e6;
}
.page-logo {
    width: 43px;
    height: 38px;
    color: #e31b23;
}

/* animate window */
.animate {
    left: 203px;
    right: 0;
    top: 191px;
    bottom: 611px;
    display: flex;
    flex-direction: column;
    background: #323232;
    border: 2px solid #262626;
    border-width: 0 0 2px 2px;
    border-radius: 16px 0 0 0;
    box-shadow: 0 0 2px rgba(0, 0, 0, .6), 0 24px 80px rgba(0, 0, 0, .5);
}
.an-title {
    display: flex;
    align-items: flex-start;
    height: 81px;
    padding: 25px 12px 0 15px;
}
.an-home {
    width: 36px;
    height: 32px;
    margin: 1px 28px 0 34px;
}
.an-name {
    height: 52px;
    padding: 0 6px;
    font-size: 25px;
    line-height: 36px;
    color: #e4e4e4;
    border-bottom: 2px solid #fff;
}
.an-vline {
    width: 2px;
    height: 40px;
    margin: -4px 0 0 22px;
    background: #464646;
}
.an-vline.tall {
    height: 48px;
    margin: -8px -14px 0;
}
.an-right {
    display: flex;
    gap: 44px;
    margin-left: auto;
}
.an-right svg {
    width: 36px;
    height: 34px;
}
.an-main {
    flex: 1;
    display: grid;
    grid-template-columns: 95px minmax(0, 1fr) 607px 48px;
    gap: 6px;
    background: #262626;
    border-top: 2px solid #282828;
    min-height: 0;
}
.an-main > * {
    background: #323232;
    min-width: 0;
}

/* tools */
.tools {
    display: flex;
    flex-direction: column;
    overflow: hidden;
}
.tools-collapse, .lib-collapse {
    height: 24px;
    padding: 6px 12px;
    border-bottom: 2px solid #282828;
}
.tools-collapse svg, .lib-collapse svg {
    width: 14px;
    height: 10px;
}
.tools-tab {
    display: flex;
    align-items: center;
    height: 33px;
    padding-left: 12px;
    font-size: 18px;
    color: #fff;
    background: linear-gradient(90deg, #323232 19px, #2d2d2d 19px);
    border-bottom: 2px solid #282828;
}
.tools-tab span {
    width: 7px;
    overflow: hidden;
}
.tools-tab svg {
    width: 20px;
    height: 14px;
    margin-left: 46px;
    color: #b8b8b8;
}
.toolset {
    padding: 19px 16px 0 15px;
    color: #b8b8b8;
}
.toolset button {
    display: flex;
    align-items: center;
    justify-content: center;
    width: 64px;
    height: 64px;
    margin-bottom: 4px;
    border-radius: 8px;
    position: relative;
}
.toolset button svg {
    width: 34px;
    height: 32px;
}
.toolset button .big {
    width: 38px;
}
.toolset button .more {
    position: absolute;
    right: 4px;
    bottom: 4px;
    width: 7px;
    height: 7px;
}
.toolset .on {
    background: #4a4a4a;
}
.toolset hr {
    height: 4px;
    margin: 8px 0;
    border: 0;
    border-radius: 2px;
    background: #282828;
}
.swatches {
    padding: 40px 0 0 15px;
}
.dots {
    width: 32px;
    height: 8px;
    margin-left: 16px;
}
.swatch-tools {
    display: flex;
    justify-content: space-between;
    width: 62px;
    margin: 32px 0 12px;
}
.swatch-tools svg {
    width: 24px;
    height: 24px;
}
.swatch {
    width: 64px;
    height: 46px;
}

/* document */
.doc {
    display: flex;
    flex-direction: column;
}
.doc-tabs {
    height: 40px;
    background: #2e2e2e;
    border-bottom: 2px solid #262626;
}
.doc-tabs div {
    display: flex;
    align-items: center;
    gap: 19px;
    width: 186px;
    height: 38px;
    padding-left: 15px;
    font-size: 20px;
    font-weight: bold;
    color: #f0f0f0;
    background: #323232;
    border-right: 2px solid #282828;
}
.doc-tabs svg {
    width: 14px;
    height: 12px;
    color: #a8a8a8;
}
.editbar {
    display: flex;
    align-items: center;
    height: 68px;
    padding: 0 17px 2px 32px;
}
.club {
    width: 36px;
    height: 36px;
}
.bar-sep {
    width: 2px;
    height: 46px;
    margin: 0 37px 0 28px;
    background: #464646;
}
.scene {
    display: flex;
    align-items: center;
    gap: 52px;
    font-size: 25px;
    color: #e0e0e0;
}
.scene svg, .zoombox svg, .lib-select svg {
    width: 20px;
    height: 12px;
    color: #dcdcdc;
}
.editbar-right {
    display: flex;
    align-items: center;
    gap: 30px;
    margin-left: auto;
}
.editbar-right > svg {
    width: 34px;
    height: 34px;
}
.editbar-right .stepper {
    width: 20px;
    height: 40px;
    margin: 0 -23px 0 2px;
}
.zoombox {
    display: flex;
    width: 166px;
    height: 48px;
    border: 2px solid #474747;
    border-radius: 0 8px 8px 0;
    background: #282828;
}
.zoombox input {
    width: 130px;
    padding: 0 4px 4px 0;
    font-size: 24px;
    text-align: center;
    color: #f0f0f0;
    border-right: 2px solid #474747;
}
.zoombox button {
    padding-left: 6px;
}
.stage {
    flex: 1;
    display: flex;
    background: #262626;
    min-height: 0;
}
.canvas {
    flex: 1;
    background: #fff;
}
.vscroll {
    width: 32px;
    padding: 330px 12px 0;
}
.vscroll i {
    height: 122px;
    border-radius: 4px;
    background: #6c6c6c;
}
.hscroll {
    height: 38px;
    padding: 12px 650px;
    background: #272727;
}
.hscroll i {
    width: 160px;
    height: 8px;
    border-radius: 4px;
    background: #6c6c6c;
}

/* timeline */
.tl-tabs, .lib-tabs {
    display: flex;
    align-items: center;
    height: 36px;
    font-size: 20px;
    background: #2e2e2e;
    padding-right: 10px;
}
.tl-tabs b, .lib-tabs b {
    height: 100%;
    line-height: 30px;
    padding: 0 14px;
    color: #7c7c7c;
    border-right: 2px solid #282828;
    border-bottom: 2px solid #282828;
}
.tl-tabs {
    font-size: 21px;
}
.tl-tabs .on, .lib-tabs .on {
    color: #fff;
    background: #323232;
    border-bottom-color: #323232;
}
.tl-tabs svg, .lib-tabs svg {
    width: 20px;
    height: 14px;
    margin: 0 0 2px auto;
    color: #b8b8b8;
}
.timeline {
    display: grid;
    grid-template-columns: 448px minmax(0, 1fr);
    grid-template-rows: 95px 79px 48px 78px 33px;
    gap: 2px;
    background: #272727;
}
.timeline > div {
    background: #323232;
}
.tl-left-top, .tl-left-top div {
    display: flex;
    align-items: center;
    justify-content: space-between;
}
.tl-left-top {
    padding: 0 40px;
}
.tl-left-top div {
    gap: 32px;
}
.tl-left-top svg {
    width: 32px;
    height: 32px;
}
.tl-controls {
    display: flex;
    align-items: center;
    padding-left: 52px;
    font-size: 28px;
    font-weight: bold;
    overflow: hidden;
    white-space: nowrap;
}
.tl-controls sup {
    font-size: 18px;
    font-weight: normal;
    margin-left: 5px;
    vertical-align: 12px;
    line-height: 0;
    color: #8a8a8a;
}
.fps {
    width: 159px;
    color: #7c7c7c;
}
.frame {
    width: 140px;
    color: #f0f0f0;
}
.tl-controls .frame sup {
    margin-left: 2px;
}
.tl-group {
    display: flex;
    align-items: center;
    gap: 36px;
}
.tl-group svg {
    width: 32px;
    height: 32px;
    overflow: visible;
}
.tl-sep {
    width: 2px;
    height: 64px;
    margin: 0 20px;
    background: #454545;
}
.tl-group input {
    -webkit-appearance: none;
    appearance: none;
    width: 134px;
    height: 24px;
    margin-left: -6px;
    background: linear-gradient(90deg, #b8b8b8 60px, #4a4a4a 60px) center / 100% 4px no-repeat;
}
.tl-group input::-webkit-slider-thumb {
    -webkit-appearance: none;
    width: 24px;
    height: 24px;
    border: 4px solid #c4c4c4;
    border-radius: 50%;
    background: #323232;
    box-shadow: 0 0 0 6px #323232;
}
.tl-layer-tools, .tl-layer-tools div {
    display: flex;
    align-items: center;
}
.tl-layer-tools {
    gap: 34px;
    padding: 0 37px 2px 41px;
    color: #b8b8b8;
}
.tl-layer-tools svg {
    width: 28px;
    height: 32px;
}
.tl-layer-tools .wide {
    width: 32px;
}
.tl-layer-tools div {
    flex: 1;
    justify-content: flex-end;
    gap: 26px;
}
.tl-layer-tools div svg {
    width: auto;
}
.tl-ruler {
    position: relative;
    font-size: 19px;
    color: #a8a8a8;
}
.tl-seconds {
    height: 28px;
    background: repeating-linear-gradient(90deg, #282828 0 2px, transparent 2px 120px) 94px 0 / calc(100% - 132px) 100% no-repeat;
    padding-left: 698px;
    line-height: 28px;
    border-bottom: 1px solid #282828;
}
.tl-ticks {
    height: 17px;
    background: repeating-linear-gradient(90deg, transparent 0 22px, #282828 22px 24px) 0 0 / calc(100% - 38px) 100% no-repeat;
    border-top: 1px solid #282828;
}
.tl-numbers {
    display: flex;
    padding-left: 98px;
    line-height: 34px;
}
.tl-numbers span {
    flex: none;
    width: 120px;
}
.playhead {
    position: absolute;
    left: 0;
    top: 0;
    width: 22px;
    height: 210px;
    z-index: 1;
}
.tl-layer {
    display: flex;
    align-items: center;
    padding-left: 58px;
    font-size: 20px;
    color: #fff;
}
.timeline .tl-layer {
    background: #365f8e;
}
.tl-layer svg {
    width: 24px;
    height: 24px;
}
.tl-layer span {
    width: 194px;
    margin-left: 14px;
}
.tl-layer i {
    width: 12px;
    height: 24px;
    background: #0ff;
}
.timeline .tl-frames {
    margin-right: 32px;
    background:
        repeating-linear-gradient(90deg, transparent 0 22px, #262626 22px 24px),
        repeating-linear-gradient(90deg, #2d2d2d 0 96px, #3a3a3a 96px 118px, #2d2d2d 118px 120px);
    box-shadow: 32px 0 #323232;
}
.tl-frames svg {
    width: 22px;
    height: 48px;
}
.tl-foot i {
    width: 122px;
    height: 8px;
    margin: 12px 0 0 2px;
    border-radius: 4px;
    background: #6c6c6c;
}

/* library */
.library {
    display: flex;
    flex-direction: column;
    font-size: 19px;
}
.lib-collapse svg {
    margin-left: auto;
}
.lib-pick {
    display: flex;
    align-items: center;
    gap: 20px;
    height: 54px;
    padding: 2px 18px 0 7px;
}
.lib-pick > svg {
    width: 30px;
    height: 28px;
}
.lib-select {
    flex: 1;
    position: relative;
}
.lib-select select {
    -webkit-appearance: none;
    appearance: none;
    width: 100%;
    height: 38px;
    padding-left: 21px;
    font-size: 23px;
    border: 2px solid #474747;
    border-radius: 8px;
    background: #2e2e2e;
}
.lib-select svg {
    position: absolute;
    right: 24px;
    top: 12px;
}
.lib-preview {
    height: 280px;
    border-top: 4px solid #4a4a4a;
}
.lib-find {
    display: flex;
    align-items: center;
    justify-content: space-between;
    height: 44px;
    padding: 0 6px;
    font-size: 18px;
}
.lib-find label {
    display: flex;
    align-items: center;
    width: 272px;
    height: 40px;
    padding-left: 10px;
    border: 2px solid #474747;
    border-radius: 8px;
    background: #262626;
}
.lib-find svg {
    width: 24px;
    height: 24px;
}
.lib-find input {
    width: 200px;
}
.lib-table {
    width: 606px;
    height: 52px;
    margin: 8px 0 4px;
    border-collapse: collapse;
    table-layout: fixed;
}
.lib-table th {
    padding: 0 0 0 10px;
    text-align: left;
    font-weight: normal;
    border-right: 2px solid #474747;
}
.lib-table th:last-child {
    width: 142px;
    padding-left: 8px;
}
.lib-table svg {
    display: inline-block;
    width: 22px;
    height: 18px;
    margin-left: 4px;
}
.lib-list {
    flex: 1;
    border: 2px solid #585858;
    border-bottom: 0;
    border-radius: 4px 4px 0 0;
}
.lib-foot {
    display: flex;
    align-items: center;
    gap: 10px;
    height: 38px;
    padding-left: 3px;
    color: #b8b8b8;
}
.lib-foot svg {
    width: 24px;
    height: 22px;
}
.lib-foot i {
    width: 240px;
    height: 8px;
    border-radius: 4px;
    background: #6c6c6c;
}
.dock {
    padding-top: 22px;
    overflow: hidden;
    color: #b8b8b8;
}
.dock button {
    display: block;
    width: 100%;
    height: 82px;
    padding: 4px 0 18px 18px;
    overflow: hidden;
    border-top: 2px solid #282828;
}
.dock button::before {
    content: "";
    display: block;
    height: 9px;
    background: repeating-linear-gradient(90deg, #454545 0 2px, transparent 2px 4px);
}
.dock svg {
    width: 40px;
    height: 40px;
    margin: 9px 0 0 -1px;
}
.dock button:last-child {
    border-bottom: 2px solid #282828;
    height: 84px;
}

/* dialog */
.dialog {
    left: 970px;
    top: 957px;
    width: 988px;
    border-radius: 20px;
    overflow: hidden;
    background: #323232;
    box-shadow: 0 0 0 1px #555, 0 30px 80px rgba(0, 0, 0, .45);
}
.dialog-title {
    height: 58px;
    background: #c8c9cb;
    border-bottom: 2px solid #222;
}
.dialog-body {
    display: grid;
    grid-template-columns: 60px 1fr;
    column-gap: 42px;
    padding: 30px 31px 30px 32px;
}
.dialog-body svg {
    width: 60px;
    height: 62px;
}
.dialog-body p {
    max-width: 790px;
    margin: 0;
    font-size: 24px;
    line-height: 34px;
    color: #f4f4f4;
}
.dialog-body button {
    grid-column: 2;
    justify-self: end;
    width: 160px;
    height: 64px;
    margin-top: 33px;
    border: 4px solid #e8e8e8;
    border-radius: 32px;
    font-size: 24px;
    color: #f4f4f4;
}

/* audition */
.audition {
    left: 174px;
    right: 0;
    top: 1553px;
    bottom: 0;
    display: flex;
    flex-direction: column;
    background: #141414;
    border-radius: 20px 0 0 0;
    font-size: 21px;
    color: #9c9c9c;
    box-shadow: 0 0 2px rgba(0, 0, 0, .5), 0 10px 40px rgba(0, 0, 0, .3);
}
.au-title {
    height: 39px;
    padding: 8px;
    background: #d6d6d8;
    border-radius: 20px 0 0 0;
}
.au-title i {
    width: 24px;
    height: 24px;
    border-radius: 50%;
    background: #c2c2c4;
    border: 1px solid #aaa;
}
.au-body {
    flex: 1;
    display: flex;
    flex-direction: column;
    background: #141414;
}
.au-toolbar {
    display: flex;
    align-items: center;
    height: 50px;
    padding-left: 10px;
    background: #1e1e1e;
}
.grip {
    width: 6px;
    height: 38px;
    background: repeating-linear-gradient(#444 0 2px, transparent 2px 4px);
}
.au-modes {
    display: flex;
    height: 42px;
    margin-left: 7px;
    border: 2px solid #2b2b2b;
    border-radius: 4px;
}
.au-modes button {
    display: flex;
    align-items: center;
    gap: 15px;
    width: 182px;
    padding-left: 19px;
    font-size: 22px;
}
.au-modes button.on {
    color: #3b8fd6;
    background: #151515;
    border-right: 2px solid #2b2b2b;
}
.au-modes svg, .au-views svg {
    width: 32px;
    height: 24px;
}
.au-sep {
    width: 4px;
    height: 50px;
    margin: 0 47px 0 43px;
    background: #2a2a2a;
}
.au-sep.thin {
    width: 2px;
    margin: 0 20px 0 22px;
}
.au-views {
    display: flex;
    gap: 20px;
}
.au-tools {
    display: flex;
    align-items: center;
    gap: 20px;
    color: #454545;
}
.au-tools svg {
    width: 34px;
    height: 32px;
}
.au-tools button {
    height: 44px;
    width: 46px;
    margin: 0 -5px;
    background: #111;
    border: 2px solid #2e2e2e;
    border-radius: 4px;
}
.au-tools button svg {
    margin: 0 auto;
}
.au-workspace {
    display: flex;
    align-items: center;
    gap: 27px;
    width: 150px;
    height: 50px;
    margin-left: auto;
    padding-left: 44px;
    border-left: 2px solid #111;
    color: #3b8fd6;
    overflow: hidden;
}
.au-workspace svg {
    width: 16px;
    height: 16px;
}
.au-panels {
    flex: 1;
    display: grid;
    grid-template-columns: 803px minmax(0, 1fr);
    gap: 7px;
    margin-top: 7px;
}
.au-files, .au-editor {
    display: flex;
    flex-direction: column;
    background: #232323;
}
.au-files {
    padding: 0 11px 0 13px;
}
.au-tabs {
    display: flex;
    gap: 44px;
    padding: 9px 12px 2px;
    line-height: 34px;
}
.au-tabs a {
    display: flex;
    align-items: flex-start;
    gap: 24px;
    height: 43px;
}
.au-tabs .on {
    color: #e4e4e4;
    border-bottom: 4px solid #b8b8b8;
}
.au-tabs svg {
    width: 16px;
    height: 16px;
    margin-top: 11px;
}
.au-filebar {
    display: flex;
    align-items: center;
    gap: 22px;
    height: 62px;
    padding-left: 8px;
}
.au-filebar > svg {
    width: 32px;
    height: 26px;
}
.au-gap {
    width: 38px;
}
.au-filebar .dim {
    width: 34px;
}
.au-search {
    display: flex;
    align-items: center;
    flex: 1;
    height: 40px;
    margin-left: 43px;
    padding-left: 12px;
    background: #161616;
    border: 2px solid #313131;
    border-radius: 4px;
}
.au-search svg {
    width: 34px;
    height: 24px;
}
.au-search input {
    width: 300px;
}
.au-table {
    width: 100%;
    table-layout: fixed;
    border-collapse: collapse;
    border: 2px solid #2e2e2e;
}
.au-table th, .au-table td {
    padding: 0 0 0 9px;
    text-align: left;
    font-weight: normal;
    white-space: nowrap;
    overflow: hidden;
    height: 38px;
    line-height: 30px;
}
.au-table th {
    padding-bottom: 4px;
    border-right: 2px solid #1d1d1d;
}
.au-table th:nth-child(2) { width: 82px; }
.au-table th:nth-child(3) { width: 202px; }
.au-table th:nth-child(4) { width: 133px; }
.au-table tbody {
    color: #4aa0e6;
    background: #1f1f1f;
    border: 2px solid #2e2e2e;
}
.au-table td:nth-child(3) { padding-left: 30px; }
.au-table td:nth-child(4) { padding-left: 14px; }
.au-table svg {
    display: inline-block;
    width: 16px;
    height: 18px;
    margin-left: 4px;
}
.au-table td svg.twist {
    width: 10px;
    height: 16px;
    margin: 0 35px 0 4px;
}
.au-table td svg.wavicon {
    width: 30px;
    height: 22px;
    margin: 0 13px 0 0;
    vertical-align: middle;
}
.au-list {
    flex: 1;
    border: 2px solid #2e2e2e;
    border-width: 0 2px;
    background: #1e1e1e;
}
.au-editor .au-tabs {
    padding-left: 22px;
}
.au-overview-row, .au-ruler-row, .au-wave-row {
    display: flex;
    padding-left: 17px;
}
.au-overview-row {
    align-items: center;
    height: 108px;
    gap: 24px;
    padding-bottom: 14px;
}
.au-overview {
    flex: 1;
    height: 60px;
    position: relative;
    border: 4px solid #666;
    border-width: 4px 0;
    border-radius: 6px;
    background: #f7f7ff;
}
.au-overview svg {
    width: 100%;
    height: 52px;
}
.au-overview::before, .au-overview::after {
    content: "";
    position: absolute;
    top: 2px;
    width: 14px;
    height: 48px;
    border-radius: 6px;
    background: linear-gradient(90deg, #6a6a6a 4px, #333 4px 6px, #6a6a6a 6px 8px, #333 8px 10px, #6a6a6a 10px);
}
.au-overview::before { left: -8px; }
.au-overview::after { right: -6px; }
.au-zoom {
    width: 40px;
    height: 36px;
    margin-right: -11px;
}
.au-ruler {
    flex: 1;
    position: relative;
    display: grid;
    grid-template-columns: repeat(9, 1fr);
    height: 53px;
    padding: 0 5%;
    border: 2px solid #000;
    border-width: 2px 0;
    line-height: 36px;
    text-align: center;
    color: #93a49d;
    background:
        linear-gradient(90deg, #93a49d 2px, transparent 2px) 0 100% / 10% 14px repeat-x,
        linear-gradient(90deg, #93a49d 2px, transparent 2px) 0 100% / 2% 8px repeat-x,
        #2b4038;
}
.au-ruler em {
    position: absolute;
    left: 4px;
    font-style: normal;
    color: #7d9088;
}
.au-head {
    position: absolute;
    left: -11px;
    bottom: 0;
    width: 22px;
    height: 24px;
}
.au-mid {
    position: absolute;
    left: 50%;
    bottom: 6px;
    width: 14px;
    height: 12px;
    margin-left: -7px;
}
.au-snap {
    width: 41px;
    height: 46px;
    margin-left: 12px;
    padding-left: 8px;
    background: #161616;
    border: 2px solid #333;
    border-right: 0;
}
.au-snap svg {
    width: 26px;
    height: 26px;
}
.au-wave-row {
    flex: 1;
}
.au-wave {
    flex: 1;
    position: relative;
    background: #f5f6ff;
    border-left: 2px solid #b00;
}
#wave {
    width: 100%;
    height: 330px;
}
.fade {
    position: absolute;
    top: 4px;
    width: 24px;
    height: 24px;
}
.fade.in { left: 22px; }
.fade.out { right: 24px; }
.hud {
    position: absolute;
    left: 711px;
    top: 203px;
    display: flex;
    align-items: center;
    gap: 11px;
    width: 250px;
    height: 52px;
    background: rgba(66, 66, 69, .94);
    border: 2px solid #3a3a3c;
    color: #9c9c9c;
}
.hud b {
    font-weight: normal;
    color: #4aa0e6;
}
.hud svg {
    width: 32px;
    height: 30px;
}
.hud .knob {
    width: 36px;
    height: 36px;
    margin-left: -2px;
}
.hud-grip {
    width: 16px;
    height: 48px;
    margin-right: -7px;
    background: repeating-linear-gradient(#aaa 0 2px, transparent 2px 4px) 5px 14px / 6px 20px no-repeat, #666668;
}
.hud .hud-pin {
    width: 37px;
    height: 34px;
    margin-left: auto;
    padding: 7px 8px;
    border-left: 2px solid #77777a;
}
.au-scale {
    display: grid;
    grid-template-rows: 30px 93px 76px 54px 66px 30px;
    align-items: end;
    width: 53px;
    padding-left: 14px;
    line-height: 28px;
    background: repeating-linear-gradient(#555 0 2px, transparent 2px 27px) 2px 14px / 4px 100% no-repeat;
    border-left: 2px solid #000;
}
```

FILE: wave.js
```
// peak table: time position in px, height above the bottom edge
var peaks = [
    [452, 0], [453, 58], [456, 58], [459, 50], [464, 42], [468, 41], [478, 38], [485, 18], [490, 17], [497, 11], [500, 0],
    [685, 0], [701, 16], [712, 14], [720, 35], [727, 64], [731, 56], [735, 52], [739, 44], [744, 30], [749, 14], [754, 8],
    [760, 22], [764, 22], [770, 0], [790, 15], [796, 4], [808, 5], [812, 0], [896, 9], [904, 11], [922, 17], [932, 18],
    [940, 27], [944, 19], [960, 15], [970, 19], [975, 4], [998, 28], [1003, 20], [1018, 11], [1028, 37], [1032, 58],
    [1037, 19], [1045, 19], [1057, 32], [1062, 23], [1074, 15], [1083, 36], [1086, 60], [1092, 34], [1097, 19], [1112, 32],
    [1123, 17], [1136, 36], [1141, 5], [1152, 8], [1186, 13], [1209, 7], [1229, 17], [1246, 29], [1271, 15], [1295, 19],
    [1300, 5], [1320, 39], [1326, 42], [1333, 26], [1343, 42], [1348, 15], [1352, 3], [1404, 17], [1424, 11], [1435, 20],
    [1446, 28], [1450, 3], [1485, 18], [1492, 5], [1546, 17], [1559, 31], [1563, 2], [1599, 7], [1604, 0], [1630, 3],
    [1648, 27], [1655, 38], [1659, 15], [1662, 0]
];
var seed = 7;
function rnd() {
    seed = (seed * 16807) % 2147483647;
    return seed / 2147483647;
}
function level(x) {
    if (x < peaks[0][0]) return 0;
    for (var i = 1; i < peaks.length; i++) {
        if (x < peaks[i][0]) {
            var a = peaks[i - 1], b = peaks[i];
            return a[1] + (b[1] - a[1]) * (x - a[0]) / (b[0] - a[0]);
        }
    }
    return 0;
}

// main editor: grid lines, then the waveform bars
var grid = '', bars = '';
for (var g = 1; g < 10; g++) grid += 'M' + g * 168 + ' 0V330';
[109, 185, 239, 305].forEach(function (y) { grid += 'M0 ' + y + 'H1680'; });
peaks.forEach(function (p) { if (p[1]) bars += 'M' + p[0] + ' 330v-' + p[1]; });
for (var x = 450; x < 1665; x += 2) {
    var h = level(x);
    var r = rnd();
    if (h > 0 && r > .45) bars += 'M' + x + ' 330v-' + Math.round(h * r * .85);
}
document.getElementById('wave').innerHTML =
    '<path d="' + grid + '" stroke="#d5e9e0" stroke-width="2"/><path d="' + bars + '" stroke="#1f4439" stroke-width="2"/>';

// overview: two thin channels
var over = '';
[11, 39].forEach(function (mid, ch) {
    over += 'M0 ' + mid + 'H1680';
    for (var x = 20; x < 1660; x += 2) {
        var a = level(x) / 12;
        if (x > 140 && x < 190) a += ch ? 3 : 1;
        if (x > 640 && x < 840) a += 2;
        if (x > 880) a += 1;
        a = Math.min(7, a) * (.4 + rnd() * .6);
        over += 'M' + x + ' ' + (mid - a).toFixed(1) + 'v' + (a * 2).toFixed(1);
    }
});
document.getElementById('overview').innerHTML = '<path d="' + over + '" stroke="#365648" stroke-width="2"/>';
```
